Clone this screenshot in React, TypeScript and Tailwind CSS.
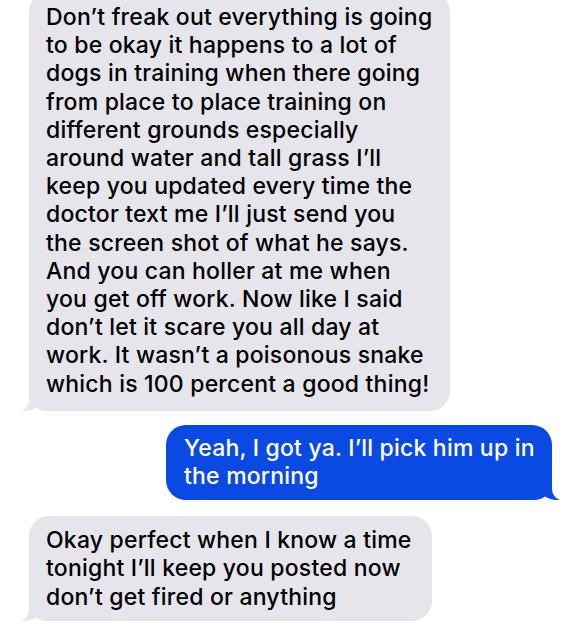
const font = { fontFamily: "Inter, 'Liberation Sans', sans-serif" };

function LeftTail() {
    return (
        <svg className="absolute left-[-8px] bottom-0" width="28" height="22" viewBox="0 0 28 22">
            <path d="M8 0 L8 10 C8 16 5 20 0 22 C6 22.5 11 21 15 18.5 C18 21 22 22 28 22 L28 0 Z" fill="#e6e5eb" />
        </svg>
    );
}

function RightTail() {
    return (
        <svg className="absolute right-[-8px] bottom-0" width="28" height="22" viewBox="0 0 28 22">
            <path d="M20 0 L20 10 C20 16 23 20 28 22 C22 22.5 17 21 13 18.5 C10 21 6 22 0 22 L0 0 Z" fill="#0b4ae2" />
        </svg>
    );
}

function Lines({ lines }: { lines: string[] }) {
    return (
        <>
            {lines.map((l, i) => (
                <div key={i} className="whitespace-nowrap">{l}</div>
            ))}
        </>
    );
}

export default function App() {
    const first = [
        "Don’t freak out everything is going",
        "to be okay it happens to a lot of",
        "dogs in training when there going",
        "from place to place training on",
        "different grounds especially",
        "around water and tall grass I’ll",
        "keep you updated every time the",
        "doctor text me I’ll just send you",
        "the screen shot of what he says.",
        "And you can holler at me when",
        "you get off work. Now like I said",
        "don’t let it scare you all day at",
        "work. It wasn’t a poisonous snake",
        "which is 100 percent a good thing!",
    ];

    return (
        <div className="w-[582px] h-[632px] bg-white overflow-hidden text-[23px] font-medium tracking-[0.2px] text-black" style={font}>
            <div className="flex flex-col">
                {/* incoming */}
                <div className="relative ml-[29px] w-[421px] mt-[-8px] pt-[11px] pb-[13px] pl-[17px] rounded-[20px] bg-[#e6e5eb] leading-[28.2px]">
                    <LeftTail />
                    <div className="relative"><Lines lines={first} /></div>
                </div>

                {/* outgoing */}
                <div className="relative self-end mr-[30px] mt-[14px] w-[386px] py-[9px] pl-[18px] rounded-[20px] bg-[#0b4ae2] text-white leading-[28.5px]">
                    <RightTail />
                    <div className="relative">
                        <Lines lines={["Yeah, I got ya. I’ll pick him up in", "the morning"]} />
                    </div>
                </div>

                {/* incoming */}
                <div className="relative ml-[29px] mt-[16px] w-[403px] pt-[10px] pb-[9.5px] pl-[17px] rounded-[20px] bg-[#e6e5eb] leading-[28.5px]">
                    <LeftTail />
                    <div className="relative">
                        <Lines lines={["Okay perfect when I know a time", "tonight I’ll keep you posted now", "don’t get fired or anything"]} />
                    </div>
                </div>
            </div>
        </div>
    );
}
